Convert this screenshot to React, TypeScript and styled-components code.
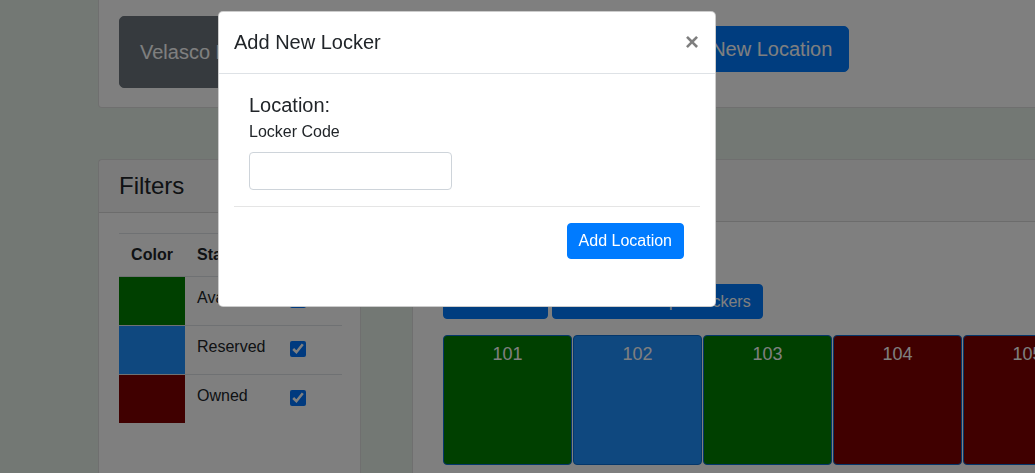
import React from "react";
import styled, { createGlobalStyle } from "styled-components";

const GlobalStyle = createGlobalStyle`
  *, *::before, *::after { box-sizing: border-box; }
  html, body { margin: 0; padding: 0; }
  body {
    background: #e7f1e8;
    font-family: "Liberation Sans", Arial, Helvetica, sans-serif;
    color: #212529;
    font-size: 16px;
    line-height: 1.5;
    width: 1035px;
    height: 473px;
    overflow: hidden;
  }
`;

const Page = styled.div`
  width: 1400px;
  padding-left: 98px;
`;

const Card = styled.div`
  background: #fff;
  border: 1px solid rgba(0, 0, 0, 0.125);
  border-radius: 4px;
`;

const TopCard = styled(Card)`
  border-top: none;
  border-radius: 0 0 4px 4px;
  padding: 16px 20px 19px;
  display: grid;
  grid-template-columns: 534px auto;
  align-items: start;
  justify-items: start;
`;

const SchoolButton = styled.button`
  font: inherit;
  font-size: 20px;
  line-height: 30px;
  color: #fff;
  background: #6c757d;
  border: 1px solid #6c757d;
  border-radius: 5px;
  padding: 20px 20px;
  white-space: nowrap;
`;

const LargeButton = styled.button`
  font: inherit;
  font-size: 20px;
  line-height: 30px;
  color: #fff;
  background: #007bff;
  border: 1px solid #007bff;
  border-radius: 5px;
  padding: 7px 16px;
  margin-top: 10px;
  white-space: nowrap;
`;

const Button = styled.button<{ $height?: number }>`
  font: inherit;
  font-size: 16px;
  line-height: 24px;
  color: #fff;
  background: #007bff;
  border: 1px solid #007bff;
  border-radius: 4px;
  padding: 0 11px;
  height: ${(p) => p.$height ?? 36}px;
  white-space: nowrap;
`;

const Columns = styled.div`
  display: grid;
  grid-template-columns: 263px 1fr;
  column-gap: 51px;
  margin-top: 51px;
  align-items: start;
`;

const CardHeader = styled.div<{ $height: number }>`
  height: ${(p) => p.$height}px;
  padding: 12px 20px;
  background: rgba(0, 0, 0, 0.03);
  border-bottom: 1px solid rgba(0, 0, 0, 0.125);
`;

const CardTitle = styled.h4`
  margin: 0;
  font-size: 24px;
  font-weight: 400;
  line-height: 1.2;
`;

const FilterBody = styled.div`
  padding: 20px;
  min-height: 300px;
`;

const FilterTable = styled.table`
  width: 223px;
  border-collapse: collapse;
  th {
    font-weight: 700;
    text-align: left;
    padding: 9px 12px 9px;
    border-top: 1px solid #dee2e6;
    line-height: 24px;
  }
  td {
    padding: 9px 12px;
    border-top: 1px solid #dee2e6;
    vertical-align: top;
    line-height: 24px;
  }
`;

const ColorHead = styled.th`
  width: 66px;
  && { text-align: center; }
`;

const SwatchCell = styled.td`
  && { padding: 0; }
  width: 66px;
`;

const Swatch = styled.div<{ $color: string }>`
  height: 48px;
  background: ${(p) => p.$color};
`;

const StatusCell = styled.td`
  width: 93px;
`;

const CheckCell = styled.td``;

const Check = styled.input`
  display: block;
  width: 16px;
  height: 16px;
  margin: 6px 0 0;
  accent-color: #0075ff;
`;

const LockerCard = styled(Card)`
  min-height: 400px;
`;

const LockerBody = styled.div`
  padding: 62px 30px 30px;
`;

const ButtonRow = styled.div`
  display: flex;
  gap: 4px;
`;

const LockerRow = styled.div`
  display: flex;
  gap: 1px;
  margin-top: 16px;
`;

const Locker = styled.div<{ $color: string }>`
  flex: none;
  width: 129px;
  height: 130px;
  border: 1px solid #0a6fd6;
  border-radius: 4px;
  background: ${(p) => p.$color};
  color: #fff;
  text-align: center;
  font-size: 18px;
  line-height: 24px;
  padding-top: 6px;
`;

const Backdrop = styled.div`
  position: fixed;
  inset: 0;
  background: rgba(0, 0, 0, 0.5);
  z-index: 10;
`;

const Modal = styled.div`
  position: fixed;
  top: 11px;
  left: 218px;
  width: 498px;
  background: #fff;
  border: 1px solid rgba(0, 0, 0, 0.2);
  border-radius: 5px;
  z-index: 20;
`;

const ModalHeader = styled.div`
  display: flex;
  align-items: flex-start;
  padding: 15px 15px 16px;
  border-bottom: 1px solid #dee2e6;
`;

const ModalTitle = styled.h5`
  margin: 0;
  font-size: 20px;
  font-weight: 400;
  line-height: 30px;
`;

const CloseButton = styled.button`
  font-family: inherit;
  background: transparent;
  border: 0;
  padding: 16px;
  margin: -13px -15px -16px auto;
  font-size: 24px;
  font-weight: 700;
  line-height: 1;
  color: #000;
  opacity: 0.5;
`;

const ModalBody = styled.div`
  padding: 16px 15px 17px;
`;

const FormBlock = styled.div`
  padding: 0 15px;
`;

const LocationHeading = styled.div`
  font-size: 20px;
  line-height: 30px;
`;

const Label = styled.label`
  display: block;
  font-size: 16px;
  line-height: 24px;
  margin-bottom: 8px;
`;

const TextInput = styled.input`
  display: block;
  width: 203px;
  height: 38px;
  padding: 6px 12px;
  font: inherit;
  border: 1px solid #ced4da;
  border-radius: 4px;
  color: #495057;
`;

const Divider = styled.hr`
  margin: 16px 0;
  border: 0;
  border-top: 1px solid rgba(0, 0, 0, 0.1);
`;

const Actions = styled.div`
  display: flex;
  justify-content: flex-end;
  padding: 0 16px 30px 0;
`;

const statuses = [
  { name: "Available", color: "#008000" },
  { name: "Reserved", color: "#1e90ff" },
  { name: "Owned", color: "#800000" },
];

const lockers = [
  { code: "101", color: "#008000" },
  { code: "102", color: "#1e90ff" },
  { code: "103", color: "#008000" },
  { code: "104", color: "#800000" },
  { code: "105", color: "#800000" },
  { code: "106", color: "#008000" },
];

export default function App() {
  return (
    <>
      <GlobalStyle />
      <Page>
        <TopCard>
          <SchoolButton>Velasco Lockers</SchoolButton>
          <LargeButton>Add New Location</LargeButton>
        </TopCard>
        <Columns>
          <Card>
            <CardHeader $height={53}>
              <CardTitle>Filters</CardTitle>
            </CardHeader>
            <FilterBody>
              <FilterTable>
                <thead>
                  <tr>
                    <ColorHead>Color</ColorHead>
                    <th>Status</th>
                    <th></th>
                  </tr>
                </thead>
                <tbody>
                  {statuses.map((s) => (
                    <tr key={s.name}>
                      <SwatchCell>
                        <Swatch $color={s.color} />
                      </SwatchCell>
                      <StatusCell>{s.name}</StatusCell>
                      <CheckCell>
                        <Check type="checkbox" defaultChecked />
                      </CheckCell>
                    </tr>
                  ))}
                </tbody>
              </FilterTable>
            </FilterBody>
          </Card>
          <LockerCard>
            <CardHeader $height={62}>
              <CardTitle>Lockers</CardTitle>
            </CardHeader>
            <LockerBody>
              <ButtonRow>
                <Button $height={35}>Add Locker</Button>
                <Button $height={35}>Generate Multiple Lockers</Button>
              </ButtonRow>
              <LockerRow>
                {lockers.map((l) => (
                  <Locker key={l.code} $color={l.color}>
                    {l.code}
                  </Locker>
                ))}
              </LockerRow>
            </LockerBody>
          </LockerCard>
        </Columns>
      </Page>
      <Backdrop />
      <Modal role="dialog" aria-modal="true">
        <ModalHeader>
          <ModalTitle>Add New Locker</ModalTitle>
          <CloseButton aria-label="Close">×</CloseButton>
        </ModalHeader>
        <ModalBody>
          <FormBlock>
            <LocationHeading>Location:</LocationHeading>
            <Label htmlFor="locker-code">Locker Code</Label>
            <TextInput id="locker-code" type="text" />
          </FormBlock>
          <Divider />
          <Actions>
            <Button>Add Location</Button>
          </Actions>
        </ModalBody>
      </Modal>
    </>
  );
}
